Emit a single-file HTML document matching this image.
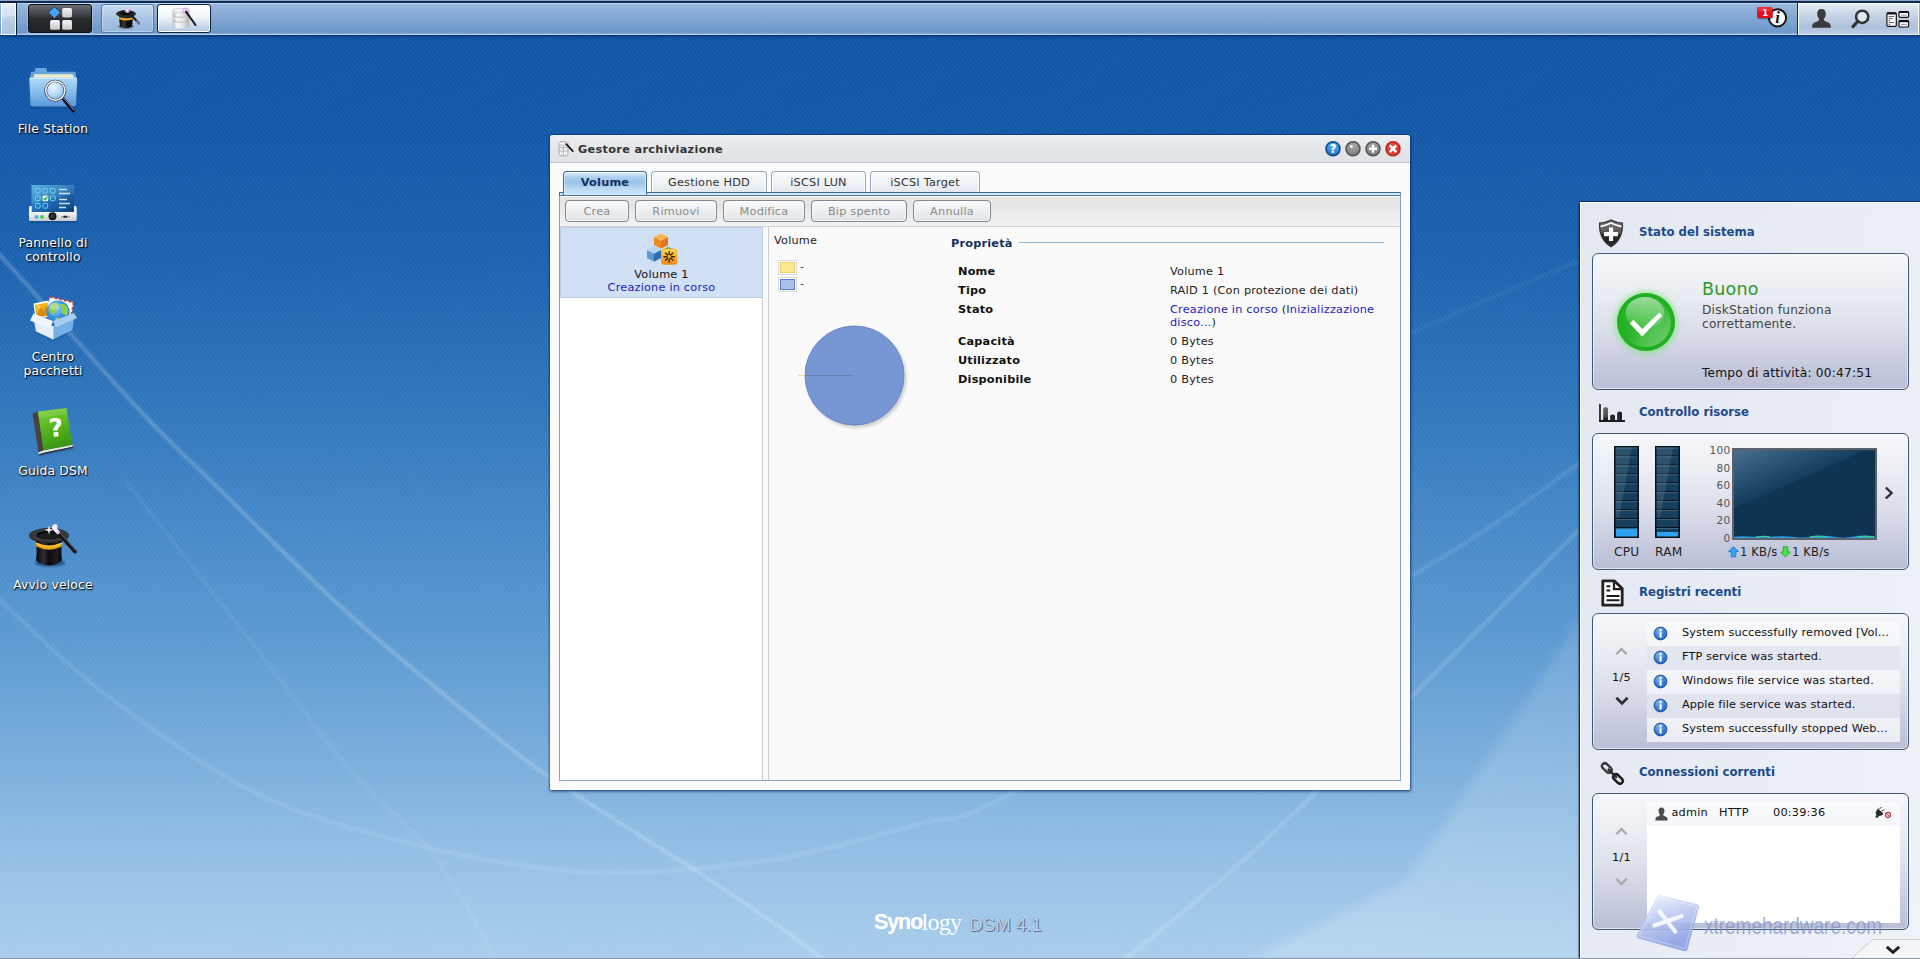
<!DOCTYPE html>
<html lang="it">
<head>
<meta charset="utf-8">
<title>DiskStation - Synology DSM 4.1</title>
<style>
*{box-sizing:border-box;margin:0;padding:0}
html,body{width:1920px;height:959px;overflow:hidden}
body{position:relative;font-family:"DejaVu Sans","Liberation Sans",sans-serif;font-size:11.3px;letter-spacing:.2px;color:#111;background:#1257a6}
.abs{position:absolute}
#bg{position:absolute;left:0;top:0;width:1920px;height:959px;
 background:linear-gradient(180deg,#1055a6 0px,#1157a8 120px,#1b62b0 260px,#2e75bc 400px,#4488c8 520px,#5c9ad2 640px,#7aaedd 760px,#98c2e7 870px,#a9ceed 959px)}
#stripes{position:absolute;left:0;top:0;width:1920px;height:959px;
 background:repeating-linear-gradient(53deg,rgba(255,255,255,.04) 0px,rgba(255,255,255,.04) 1.300px,rgba(255,255,255,0) 2.200px,rgba(0,0,0,.018) 2.600px,rgba(0,0,0,.018) 3px,rgba(255,255,255,0) 3.400px)}
#streaks{position:absolute;left:0;top:0}
#botline{position:absolute;left:0;top:958px;width:1920px;height:1px;background:#8d96a0;z-index:60}

/* taskbar */
#taskbar{position:absolute;left:0;top:0;width:1920px;height:36px;background:linear-gradient(180deg,#8fa5c3 0,#8fa5c3 .8px,#0e2b57 1.200px,#0e2b57 2.700px,#bfd7f1 3.100px,#bfd7f1 3.900px,#97b7dc 4.300px,#86a9d4 16px,#6a97ca 33.300px,#b3cfee 33.800px,#b3cfee 34.900px,#0c3672 35.200px,#0d3f82 36px);box-shadow:0 1px 2px rgba(8,40,100,.6)}
#showdesk{position:absolute;left:1px;top:3px;width:15px;height:32px;border:1px solid #fff;background:linear-gradient(170deg,#e4ecf6 0,#d6e2f0 40%,#bdd0e7 46%,#a9c3e0 100%);box-shadow:1px 0 0 #0a1a30,0 -1px 0 #0a1a30,1px -1px 0 #0a1a30}
.tbtn{position:absolute;top:4px;height:29px;border-radius:3px}
#mainmenu{left:28px;width:64px;border:1px solid #0c1118;background:linear-gradient(180deg,#5b6066 0,#2e3236 35%,#15181b 52%,#0a0c0e 100%);box-shadow:0 0 0 1px rgba(255,255,255,.25)}
#tb1{left:101px;width:53px;border:1px solid #4d78aa;background:linear-gradient(180deg,#c9dcf0 0,#a9c5e5 50%,#94b6dc 100%);box-shadow:inset 0 0 0 1px rgba(255,255,255,.35)}
#tb2{left:157px;width:54px;border:1px solid #10233d;background:linear-gradient(180deg,#ffffff 0,#f2f6fb 45%,#c5d6eb 80%,#b5cbe5 100%);box-shadow:inset 0 0 0 1px #fff}
#tray{position:absolute;left:1798px;top:3px;width:121px;height:32px;border:1px solid #fff;border-bottom-color:#e3ebf4;background:linear-gradient(180deg,#e6ecf4 0,#d3dcea 22%,#bfcde2 50%,#adc1dc 78%,#bccee4 100%);box-shadow:-1px 0 0 #1a2c47}

/* desktop icons */
.dicon{position:absolute;left:0;width:106px;text-align:center;color:#fff;font-size:12.300px;letter-spacing:.2px;line-height:14px;text-shadow:1px 1px 1px rgba(0,0,0,.9),0 1px 2px rgba(0,0,0,.55)}
.dsvg{position:absolute;left:27px;width:52px;height:52px}

/* window */
#win{position:absolute;left:550px;top:135px;width:860px;height:655px;background:#fbfbfb;border-radius:3px 3px 1px 1px;box-shadow:0 0 2px 1px rgba(10,40,90,.55),1px 2px 3px rgba(10,40,90,.35)}
#wtitle{position:absolute;left:0;top:0;width:860px;height:28px;border-radius:3px 3px 0 0;background:linear-gradient(180deg,#eceff2 0,#e4e7ea 50%,#dfe3e7 100%);border-bottom:1px solid #c3c7cc}
#wtitle b{position:absolute;left:28px;top:8px;letter-spacing:.31px;line-height:13px;color:#333;white-space:nowrap}
.wb{position:absolute;top:6px;width:16px;height:16px}
.tab{position:absolute;top:36px;height:22px;border:1px solid #98a7b6;border-bottom:none;border-radius:4px 4px 0 0;background:linear-gradient(180deg,#fbfcfd 0,#eef2f6 55%,#e2e8ee 100%);text-align:center;line-height:21px;color:#333;box-shadow:inset 0 1px 0 #fff,inset 1px 0 0 #fff,inset -1px 0 0 #fff}
.tab.act{height:24px;border-color:#41698b;background:linear-gradient(180deg,#eaf3fb 0,#b4d3f0 18%,#98c2ea 45%,#bad9f3 72%,#d0e8fa 100%);color:#15315e;font-weight:bold;z-index:2;box-shadow:inset 0 1px 0 rgba(255,255,255,.8),inset 1px 0 0 rgba(255,255,255,.5),inset -1px 0 0 rgba(255,255,255,.5)}
#tstrip{position:absolute;left:9px;top:57px;width:842px;height:4px;border:1px solid #41698b;border-bottom-color:#4b7596;background:linear-gradient(180deg,#c6e2f8,#d6edfc);border-right-color:#7ba0c0}
#panel{position:absolute;left:9px;top:61px;width:842px;height:585px;border:1px solid #89a4bd;border-top:none;background:#fff}
#tbar{position:absolute;left:0;top:0;width:840px;height:31px;border-top:1px solid #fff;border-bottom:1px solid #cfd1d3;background:linear-gradient(180deg,#e4e4e4 0,#e9e9e9 45%,#f3f3f3 100%)}
.btn{position:absolute;top:3px;height:22px;border:1px solid #7c8894;border-radius:4px;background:linear-gradient(180deg,#fafafa 0,#eef0f2 45%,#dfe3e8 100%);color:#8c8c8c;text-align:center;line-height:21.500px;box-shadow:inset 0 0 0 1px rgba(255,255,255,.7)}
#vlist{position:absolute;left:0;top:31px;width:203px;height:553px;background:#fff;border-right:1px solid #c9cdd1}
#vitem{position:absolute;left:0;top:0;width:203px;height:71px;background:#d0e1f5;border:1px dotted #a9b8cc;text-align:center}
#split{position:absolute;left:203px;top:31px;width:6px;height:553px;background:#fafafa;border-right:1px solid #c9cdd1}
#vright{position:absolute;left:209px;top:31px;width:631px;height:553px;background:#fafafa}
.lbl{position:absolute;left:189px;font-weight:bold;color:#111;white-space:nowrap;line-height:13px}
.val{position:absolute;left:401px;color:#222;white-space:nowrap;line-height:13px}
.blue{color:#1d1db6}

/* widgets */
#widgets{position:absolute;left:1579px;top:202px;width:341px;height:757px;border-left:1px solid #0f2f60;border-top:1px solid #fff;background:linear-gradient(100deg,#e3e8f1 0,#e9edf4 55%,#eff2f7 100%);box-shadow:inset 1px 0 0 #fff,0 -1px 0 #0d2d5e,-1px 0 1px rgba(10,40,90,.35)}
.wt{position:absolute;left:59px;font-family:'DejaVu Sans Condensed','DejaVu Sans',sans-serif;font-size:13px;font-weight:bold;color:#1b4a8c;line-height:16px;letter-spacing:0;white-space:nowrap}
.wp{position:absolute;left:12px;width:317px;height:137px;border:1px solid #3f5979;border-radius:6px;background:linear-gradient(180deg,#f5f7fa 0,#eceef4 25%,#dcdfea 55%,#c4c8dc 85%,#bbbfd6 100%);box-shadow:inset 0 0 0 1px rgba(255,255,255,.55)}
.t12{font-size:12.2px;letter-spacing:.2px}
.t13{font-size:12.2px;letter-spacing:.2px}
.row{position:absolute;left:54px;width:253px;height:24px}
.row span{position:absolute;left:35px;top:4px;line-height:14px;white-space:nowrap;color:#111;letter-spacing:.1px}
.nav{position:absolute;left:19px;width:18px;text-align:center;line-height:13px;color:#111}
</style>
</head>
<body>
<div id="bg"></div>
<div id="stripes"></div>
<svg id="streaks" width="1920" height="959" viewBox="0 0 1920 959">
 <defs><filter id="bl" x="-5%" y="-5%" width="110%" height="110%"><feGaussianBlur stdDeviation="1.400"/></filter><filter id="bl2" x="-5%" y="-5%" width="110%" height="110%"><feGaussianBlur stdDeviation="5"/></filter>
 <linearGradient id="beam" x1="0" y1="1" x2="1" y2="0"><stop offset="0" stop-color="#fff" stop-opacity=".20"/><stop offset="1" stop-color="#fff" stop-opacity=".04"/></linearGradient></defs>
 <path d="M1250,959L1408,880L1579,620L1920,300V959z" fill="url(#beam)" filter="url(#bl2)"/>
 <g fill="none" stroke="#fff" filter="url(#bl)">
  <path d="M-20,235C-17,238 -25,228 0,255C25,282 95,362 130,400C165,438 173,444 210,480C247,516 302,572 350,615C398,658 463,710 500,740C537,770 538,769 572,792C606,815 666,851 707,878C748,905 798,940 818,955C838,970 828,963 830,965" stroke-opacity=".3" stroke-width="2.600"/>
  <path d="M-20,580C-17,583 -20,582 0,600C20,618 58,658 100,690C142,722 200,765 250,790C300,815 344,827 400,841C456,855 522,869 584,872C646,875 713,868 769,860C825,852 881,834 922,823C963,812 934,833 1015,792C1096,751 1314,633 1408,578C1502,523 1530,497 1579,464C1628,431 1680,394 1700,380" stroke-opacity=".15" stroke-width="3"/>
  <path d="M125,480C146,507 212,592 250,640C288,688 320,735 350,770C380,805 405,818 430,850C455,882 488,946 500,965" stroke-opacity=".08" stroke-width="3"/>
  <path d="M1118,965C1119,964 1106,974 1125,959C1144,944 1199,899 1230,872C1261,845 1280,827 1310,798C1340,769 1363,745 1408,700C1453,655 1530,578 1579,530C1628,482 1680,430 1700,410" stroke-opacity=".2" stroke-width="3"/>
  <path d="M1300,380C1318,372 1362,354 1408,334C1454,314 1530,281 1579,261C1628,241 1680,223 1700,215" stroke-opacity=".07" stroke-width="3"/>
 </g>
</svg>
<div id="botline"></div>

<!-- TASKBAR -->
<div id="taskbar">
 <div id="showdesk"></div>
 <div id="mainmenu" class="tbtn"><svg width="62" height="27" viewBox="0 0 62 27" style="position:absolute;left:0;top:0">
   <defs><pattern id="ck" width="2.400" height="2.400" patternUnits="userSpaceOnUse"><rect width="1.200" height="1.200" fill="#fff" fill-opacity=".17"/><rect x="1.200" y="1.200" width="1.200" height="1.200" fill="#fff" fill-opacity=".17"/></pattern>
   <linearGradient id="sq" x1="0" y1="0" x2="0" y2="1"><stop offset="0" stop-color="#f4f4f4"/><stop offset="1" stop-color="#c9c9c9"/></linearGradient></defs>
   <rect width="62" height="27" rx="2" fill="url(#ck)"/>
   <path d="M25.400,1.500L31.400,7.500L25.400,13.500L19.400,7.500z" fill="#4a9ff6" stroke="#2a2f36" stroke-width=".8"/>
   <rect x="33.200" y="3" width="9.800" height="9.400" rx="1.600" fill="url(#sq)"/><rect x="21.100" y="15" width="9.800" height="9.800" rx="1.600" fill="url(#sq)"/><rect x="33.200" y="15" width="9.800" height="9.800" rx="1.600" fill="url(#sq)"/>
  </svg></div>
 <div id="tb1" class="tbtn"><svg width="30" height="24" viewBox="0 0 30 24" style="position:absolute;left:13px;top:2px">
   <defs><linearGradient id="hat" x1="0" y1="0" x2="1" y2="0"><stop offset="0" stop-color="#000"/><stop offset=".35" stop-color="#3a3a3a"/><stop offset=".6" stop-color="#0a0a0a"/><stop offset="1" stop-color="#000"/></linearGradient></defs>
   <ellipse cx="11" cy="19.500" rx="8" ry="2.600" fill="#000" opacity=".35"/>
   <path d="M3.800,7.500L5,19.500Q11,22.500 17,19.500L18.200,7.500z" fill="url(#hat)"/>
   <ellipse cx="11" cy="6.700" rx="10" ry="3.600" fill="#2c2c2c"/><ellipse cx="11" cy="6.300" rx="6.200" ry="1.900" fill="#0c0c0c"/>
   <path d="M4.050,10L4.300,12.300Q11,14.800 17.700,12.300L17.950,10Q11,12.500 4.050,10z" fill="#e8a818"/>
   <path d="M12.500,4L24,16.500" stroke="#1c1c22" stroke-width="2.100" stroke-linecap="round"/><path d="M21.500,14L24,16.600" stroke="#8a8a92" stroke-width="1.500" stroke-linecap="round"/>
   <circle cx="12.300" cy="3.600" r="2.400" fill="#e9b8f4" opacity=".9"/><circle cx="12.300" cy="3.600" r="1" fill="#fff"/>
  </svg></div>
 <div id="tb2" class="tbtn"><svg width="30" height="24" viewBox="0 0 30 24" style="position:absolute;left:13px;top:2px">
   <defs><linearGradient id="cyl" x1="0" y1="0" x2="1" y2="0"><stop offset="0" stop-color="#c2c2c2"/><stop offset=".3" stop-color="#f8f8f8"/><stop offset=".65" stop-color="#e2e2e2"/><stop offset="1" stop-color="#b0b0b0"/></linearGradient></defs>
   <path d="M1.500,3.500V19.500Q10,23.500 18.500,19.500V3.500z" fill="url(#cyl)"/>
   <ellipse cx="10" cy="3.500" rx="8.500" ry="2.300" fill="#f2f2f2" stroke="#c4c4c4" stroke-width=".6"/>
   <path d="M1.500,8.500Q10,12.200 18.500,8.500M1.500,13.500Q10,17.200 18.500,13.500" fill="none" stroke="#b9b9b9" stroke-width=".9"/>
   <circle cx="14.500" cy="3.800" r="3.400" fill="#d8a8f0" opacity=".75"/><circle cx="14.500" cy="3.800" r="1.200" fill="#fff"/>
   <path d="M15,4.600L24.500,18" stroke="#1c1c22" stroke-width="2.100" stroke-linecap="round"/>
  </svg></div>
 <div id="tray"><svg width="120" height="32" viewBox="1798 3 120 32" style="position:absolute;left:-1px;top:-1px">
   <path d="M1821.500,9C1824.200,9 1825.800,11 1825.800,13.800C1825.800,16 1824.900,17.800 1823.800,18.900C1823.900,20.600 1825,21.200 1827.200,22C1830.300,23.100 1830.900,24.800 1830.900,27.800H1812.100C1812.100,24.800 1812.700,23.100 1815.800,22C1818,21.200 1819.100,20.600 1819.200,18.900C1818.100,17.800 1817.200,16 1817.200,13.800C1817.200,11 1818.800,9 1821.500,9Z" fill="#3b3b3b"/>
   <circle cx="1862.200" cy="16.800" r="6.100" fill="#fff" fill-opacity=".45" stroke="#333" stroke-width="2.500"/><path d="M1857.600,21.700L1853,26.600" stroke="#333" stroke-width="3.200" stroke-linecap="round"/>
   <rect x="1886.900" y="12.900" width="9.400" height="13.400" rx="1.300" fill="#fff" stroke="#111" stroke-width="1.200"/><rect x="1886.900" y="12.400" width="9.400" height="2" rx=".8" fill="#111"/>
   <path d="M1888.600,16.600h5.600M1888.600,18.600h4M1888.600,20.600h1.500M1888.600,22.600h5.600M1888.600,24.400h1.500" stroke="#333" stroke-width=".8"/>
   <rect x="1899" y="11.500" width="9.600" height="5.900" rx="1.300" fill="#fff" stroke="#111" stroke-width="1.200"/><rect x="1899" y="11" width="9.600" height="2" rx=".8" fill="#111"/>
   <rect x="1899" y="20.700" width="9.600" height="6.300" rx="1.300" fill="#fff" stroke="#111" stroke-width="1.200"/><rect x="1899" y="20.200" width="9.600" height="2" rx=".8" fill="#111"/>
   <path d="M1901.200,15.200h1.200M1903.300,15.200h1.200M1905.400,15.200h1.200M1901.200,24.600h1.200M1903.300,24.600h1.200M1905.400,24.600h1.200" stroke="#333" stroke-width=".9"/>
  </svg></div>
 <svg class="abs" style="left:1752px;top:3px" width="40" height="30" viewBox="1752 3 40 30">
  <circle cx="1777.500" cy="17.800" r="8.600" fill="#fff" stroke="#141414" stroke-width="2"/>
  <text x="1777.600" y="23.400" font-family="'Liberation Serif',serif" font-style="italic" font-weight="bold" font-size="16.500" fill="#111" text-anchor="middle" letter-spacing="0">i</text>
  <rect x="1757.500" y="8.200" width="15.600" height="11" rx="1.800" fill="#000" opacity=".35"/>
  <rect x="1757" y="7" width="15.600" height="11" rx="1.800" fill="#e20e1a"/><rect x="1757" y="7" width="15.600" height="4.500" rx="1.800" fill="#f0505a" opacity=".5"/>
  <text x="1765.300" y="15.600" font-family="'DejaVu Sans',sans-serif" font-weight="bold" font-size="8.500" fill="#fff" text-anchor="middle" letter-spacing="0">1</text>
 </svg>
</div>


<!-- DESKTOP ICONS -->
<svg width="0" height="0" style="position:absolute"><defs>
 <linearGradient id="fF" x1="0" y1="0" x2="0" y2="1"><stop offset="0" stop-color="#b4d9f8"/><stop offset=".5" stop-color="#86bdec"/><stop offset="1" stop-color="#5a98d6"/></linearGradient>
 <linearGradient id="fB" x1="0" y1="0" x2="0" y2="1"><stop offset="0" stop-color="#6aa8e0"/><stop offset="1" stop-color="#3f7fc4"/></linearGradient>
 <radialGradient id="lens" cx=".4" cy=".35" r=".7"><stop offset="0" stop-color="#f4fbff" stop-opacity=".95"/><stop offset=".6" stop-color="#b8dcf6" stop-opacity=".8"/><stop offset="1" stop-color="#7fb4e4" stop-opacity=".8"/></radialGradient>
 <linearGradient id="scr" x1="0" y1="0" x2="1" y2="1"><stop offset="0" stop-color="#4aa8e2"/><stop offset=".5" stop-color="#1f6fb4"/><stop offset="1" stop-color="#0e3f7a"/></linearGradient>
 <linearGradient id="bse" x1="0" y1="0" x2="0" y2="1"><stop offset="0" stop-color="#f6f7f9"/><stop offset="1" stop-color="#c9ccd2"/></linearGradient>
 <radialGradient id="glb" cx=".4" cy=".35" r=".75"><stop offset="0" stop-color="#8fd0ff"/><stop offset=".55" stop-color="#3a8ee0"/><stop offset="1" stop-color="#1b5cb0"/></radialGradient>
 <linearGradient id="bkc" x1="0" y1="0" x2=".3" y2="1"><stop offset="0" stop-color="#7bd238"/><stop offset=".5" stop-color="#58b81e"/><stop offset="1" stop-color="#3c9612"/></linearGradient>
 <linearGradient id="hat2" x1="0" y1="0" x2="1" y2="0"><stop offset="0" stop-color="#000"/><stop offset=".3" stop-color="#2f2f33"/><stop offset=".5" stop-color="#0c0c0e"/><stop offset=".8" stop-color="#1d1d20"/><stop offset="1" stop-color="#000"/></linearGradient>
 <filter id="ds" x="-20%" y="-20%" width="140%" height="150%"><feGaussianBlur stdDeviation="1.2"/></filter>
</defs></svg>

<svg class="dsvg" style="top:64px" viewBox="-2 -2 52 52">
 <path d="M1,40.500H48V42H1z" fill="#04204a" opacity=".35" filter="url(#ds)"/>
 <path d="M6,5.800V3.500Q6,2 7.500,2H16.500Q18,2 18,3.500V5.800H45Q47,5.800 47,7.800V38H1.500V7.800Q1.500,5.800 3.500,5.800z" fill="url(#fB)"/>
 <path d="M5,8.200H43.500L44.500,9.400V14H5z" fill="#f6f2d6"/><path d="M5,9.600H44.300" stroke="#ddd8b4" stroke-width=".6"/>
 <path d="M0.300,13Q0.200,11.300 2,11.300H46.500Q48.300,11.300 48.200,13L47,38.600Q46.900,40.400 45,40.400H3.500Q1.600,40.400 1.500,38.600z" fill="url(#fF)"/>
 <path d="M0.800,12.300H47.700" stroke="#d8ecfc" stroke-width=".9"/>
 <path d="M33.500,32.200L44.300,44.700" stroke="#0a0d18" stroke-width="3.300" stroke-linecap="round"/><path d="M34.200,31.600L44.900,44" stroke="#9aa4b6" stroke-width="1" stroke-linecap="round"/>
 <circle cx="26.300" cy="24.600" r="9.600" fill="url(#lens)" stroke="#2b3650" stroke-width="2.600"/><circle cx="26.300" cy="24.600" r="9.600" fill="none" stroke="#eef3f9" stroke-width="1.500"/>
 <path d="M19.500,22Q21.500,17.500 26.500,17" fill="none" stroke="#fff" stroke-width="1.200" opacity=".8"/>
</svg>
<div class="dicon" style="top:122px">File Station</div>

<svg class="dsvg" style="top:178px" viewBox="-2 -2 52 52">
 <rect x="1" y="39" width="46" height="3.500" fill="#04204a" opacity=".4" filter="url(#ds)"/>
 <path d="M0,28Q0,26 1.500,26H46Q47.500,26 47.500,28V39Q47.500,41 45.500,41H2Q0,41 0,39z" fill="url(#bse)"/>
 <rect x="2.500" y="5" width="42.500" height="27" fill="url(#scr)"/>
 <path d="M2.500,5H45V14L2.500,24z" fill="#fff" opacity=".1"/>
 <g fill="none" stroke="#6fd3f4" stroke-width="1"><rect x="6.500" y="8.500" width="4.600" height="4.600" rx=".8"/><rect x="14" y="8.500" width="4.600" height="4.600" rx=".8"/><rect x="21.500" y="8.500" width="4.600" height="4.600" rx=".8"/><rect x="6.500" y="16" width="4.600" height="4.600" rx=".8"/><rect x="21.500" y="16" width="4.600" height="4.600" rx=".8"/><rect x="6.500" y="23.500" width="4.600" height="4.600" rx=".8"/><rect x="14" y="23.500" width="4.600" height="4.600" rx=".8"/></g>
 <rect x="13.600" y="15.600" width="5.600" height="5.600" rx="1" fill="#e9f6ea"/><path d="M14.600,18.400L16,19.900L18.400,16.600" fill="none" stroke="#2a9a3a" stroke-width="1.200"/>
 <path d="M30,9.500h8M30,13.500h11M30,19.500h8M30,23.500h11M30,27.500h7" stroke="#d9effc" stroke-width="1.300" opacity=".9"/>
 <path d="M0,32V28Q0,26 1.500,26H2.500V32zM47.500,32V28Q47.500,26 46,26H45V32z" fill="#eceef2"/>
 <rect x="0" y="32" width="47.500" height="9" rx="1.500" fill="url(#bse)"/>
 <circle cx="7.500" cy="36.800" r="1.900" fill="#3db4ee"/><circle cx="13" cy="36.800" r="1.900" fill="#46c83c"/>
 <circle cx="23.500" cy="36.300" r="4" fill="#15171a"/><circle cx="23.500" cy="36.300" r="2.300" fill="#33373d"/>
 <rect x="32" y="36" width="9" height="1.500" fill="#9a9da3"/><rect x="34.500" y="35.800" width="3.500" height="1.900" fill="#222"/>
</svg>
<div class="dicon" style="top:236px">Pannello di<br>controllo</div>

<svg class="dsvg" style="top:292px" viewBox="-2 -2 52 52">
 <path d="M6,38L24,46L44,36L24,42z" fill="#04204a" opacity=".45" filter="url(#ds)"/>
 <path d="M21,3L44.500,8.500L42,23L18.500,17.500z" fill="#fbfbfb" stroke="#d7d7d7" stroke-width=".5"/>
 <path d="M21,3L44.500,8.500" stroke="#d8303a" stroke-width="1.800" stroke-dasharray="2.400 2.400"/><path d="M44.500,8.500L42,23" stroke="#d8303a" stroke-width="1.600" stroke-dasharray="2.400 2.400"/>
 <path d="M4.500,9.500L19.500,6.500L21.500,22.500L6.500,25z" fill="#fff"/><path d="M6,11L18.600,8.400L20.200,21.400L7.600,23.500z" fill="#f2b21c"/><path d="M8,20L12,13L15,17L17.500,11.500L19.800,21.400L7.600,23.500z" fill="#d88a12"/><circle cx="10" cy="13" r="1.600" fill="#ffe15a"/>
 <circle cx="29" cy="18" r="11.500" fill="url(#glb)"/>
 <path d="M21,12Q24,8 29,8.500Q27,12 29,14Q26,17 24.500,21Q21,19 19.500,16Q20,13.500 21,12zM31,10Q35,9 38.500,13Q40,17 38.500,21Q35,22 33,19Q31,16 32.500,14Q30.500,12.500 31,10zM26,24Q29,23 31,25.500Q30,28.500 28.500,29Q26.500,27.500 26,24z" fill="#8fd04a"/>
 <ellipse cx="25.500" cy="12.500" rx="5.500" ry="3.500" fill="#fff" opacity=".3"/>
 <path d="M4.500,24L24,32V45.500L7,37.500z" fill="#e2eefb"/><path d="M24,32L45,22.500L43.500,36L24,45.500z" fill="#78aee6"/>
 <path d="M1,26.500L4.500,19.500L24,27L21,34.500z" fill="#eef5fd"/><path d="M24,27L45,19L48,24L27,33.500z" fill="#a9cdf2"/>
 <path d="M24,32V45.500" stroke="#fff" stroke-width=".8" opacity=".7"/>
</svg>
<div class="dicon" style="top:350px">Centro<br>pacchetti</div>

<svg class="dsvg" style="top:406px" viewBox="-2 -2 52 52">
 <path d="M10,45.500L44,39L45,40.500L11,47.500z" fill="#04204a" opacity=".5" filter="url(#ds)"/>
 <path d="M3.500,5.500L9,3.500L14.500,42.500L9.500,44.300z" fill="#4b423b"/>
 <path d="M9,3.500L37.500,0L43.500,37L14.500,42.500z" fill="url(#bkc)"/>
 <path d="M9,3.500L37.500,0L38.500,6L10,10z" fill="#fff" opacity=".12"/>
 <path d="M9.500,44.300L14.500,42.500L43.500,37L43.800,38.800L15,44.700L10,46.300z" fill="#e9e9e4"/><path d="M10,46.300L15,44.700L43.800,38.800L44,39.800L15.200,45.900L10.300,47.400z" fill="#2c2a28"/>
 <text x="27" y="28.500" font-family="'DejaVu Sans',sans-serif" font-weight="bold" font-size="25" fill="#fff" text-anchor="middle" letter-spacing="0" transform="rotate(-6 27 20)">?</text>
</svg>
<div class="dicon" style="top:464px">Guida DSM</div>

<svg class="dsvg" style="top:520px" viewBox="-2 -2 52 52">
 <ellipse cx="21" cy="41" rx="15" ry="3.500" fill="#04204a" opacity=".55" filter="url(#ds)"/>
 <path d="M6.500,17Q8.500,28 7,38.500Q13,43.500 20,43.500Q27,43.500 33,38.500Q31.500,28 33.500,17z" fill="url(#hat2)"/>
 <ellipse cx="20" cy="13.500" rx="20" ry="7.500" fill="#2b2b2e"/><ellipse cx="20" cy="13.200" rx="19" ry="6.600" fill="#3a3a3e"/>
 <ellipse cx="20" cy="13" rx="12.500" ry="4.300" fill="#0b0b0d"/><ellipse cx="20" cy="14" rx="10" ry="2.800" fill="#1d1d20"/>
 <path d="M6.900,20.300Q20,26.500 33.100,20.300L32.700,24.600Q20,30.800 7.300,24.600z" fill="#eaa714"/><path d="M7,21.300Q20,27.500 33,21.300" fill="none" stroke="#ffd34d" stroke-width=".9"/>
 <path d="M26.500,7.500L46,29.500" stroke="#16161a" stroke-width="3.800" stroke-linecap="round"/><path d="M27.600,6.800L46.800,28.500" stroke="#6d6d75" stroke-width="1" stroke-linecap="round"/>
 <path d="M24.800,5.600L28.800,10.200" stroke="#e9c8ff" stroke-width="4" stroke-linecap="round"/><path d="M24.800,5.600L27.400,8.600" stroke="#fff" stroke-width="2.600" stroke-linecap="round"/>
 <path d="M19,7L20,3.500L21,7L24.500,8L21,9L20,12.500L19,9L15.500,8z" fill="#fff" opacity=".95"/><circle cx="26" cy="4.500" r="2.600" fill="#fff" opacity=".8"/>
</svg>
<div class="dicon" style="top:578px">Avvio veloce</div>


<div id="win">
 <div id="wtitle">
  <svg class="abs" style="left:8px;top:5px" width="16" height="17" viewBox="0 0 16 17">
   <path d="M1,3.5Q1,1.5 5.5,1.5T10,3.5V14Q10,16 5.5,16T1,14Z" fill="#f1f1f1" stroke="#a9a9a9" stroke-width="1"/>
   <path d="M1,7Q5.5,9 10,7M1,10.5Q5.5,12.5 10,10.5M5.5,5.5V16" fill="none" stroke="#b5b5b5" stroke-width=".9"/>
   <ellipse cx="5.5" cy="3.5" rx="4.5" ry="1.8" fill="#fff" stroke="#a9a9a9" stroke-width=".8"/>
   <circle cx="8" cy="3.6" r="2.4" fill="#e6c8f4" opacity=".8"/>
   <path d="M8.3,4.2L14.8,11.2" stroke="#16101c" stroke-width="1.7" stroke-linecap="round"/>
  </svg>
  <b>Gestore archiviazione</b>
  <svg class="abs" style="left:772px;top:4px" width="82" height="20" viewBox="0 0 82 20">
   <defs>
    <radialGradient id="gh" cx=".5" cy=".3" r=".8"><stop offset="0" stop-color="#6db4f2"/><stop offset=".6" stop-color="#2f86dc"/><stop offset="1" stop-color="#1c64b8"/></radialGradient>
    <radialGradient id="gg" cx=".5" cy=".3" r=".8"><stop offset="0" stop-color="#a9a9a9"/><stop offset=".6" stop-color="#8a8a8a"/><stop offset="1" stop-color="#707070"/></radialGradient>
    <radialGradient id="gr" cx=".5" cy=".35" r=".8"><stop offset="0" stop-color="#e8564a"/><stop offset=".6" stop-color="#d63a2e"/><stop offset="1" stop-color="#e8776a"/></radialGradient>
   </defs>
   <circle cx="11" cy="9.75" r="7" fill="url(#gh)" stroke="#124a88" stroke-width="1.5"/>
   <text x="11.2" y="14" font-family="DejaVu Sans,sans-serif" font-weight="bold" font-size="11.5" fill="#fff" text-anchor="middle" letter-spacing="0">?</text>
   <circle cx="31" cy="9.75" r="7" fill="url(#gg)" stroke="#535353" stroke-width="1.5"/>
   <rect x="28" y="6.2" width="2.6" height="2.6" rx=".8" fill="#fff"/>
   <circle cx="51" cy="9.75" r="7" fill="url(#gg)" stroke="#535353" stroke-width="1.5"/>
   <path d="M51,5.8V13.7M47,9.75H55" stroke="#fff" stroke-width="2.3"/>
   <circle cx="71" cy="9.75" r="7" fill="url(#gr)" stroke="#b5281f" stroke-width="1.5"/>
   <path d="M67.7,6.4L74.3,13.1M74.3,6.4L67.7,13.1" stroke="#fff" stroke-width="2.5"/>
  </svg>
 </div>
 <div class="tab act" style="left:13px;width:84px">Volume</div>
 <div class="tab" style="left:101px;width:116px">Gestione HDD</div>
 <div class="tab" style="left:221px;width:95px">iSCSI LUN</div>
 <div class="tab" style="left:320px;width:110px">iSCSI Target</div>
 <div id="tstrip"></div>
 <div id="panel">
  <div id="tbar">
   <div class="btn" style="left:5px;width:64px">Crea</div>
   <div class="btn" style="left:75px;width:82px">Rimuovi</div>
   <div class="btn" style="left:163px;width:82px">Modifica</div>
   <div class="btn" style="left:251px;width:96px">Bip spento</div>
   <div class="btn" style="left:353px;width:78px">Annulla</div>
  </div>
  <div id="vlist">
   <div id="vitem">
    <svg class="abs" style="left:84px;top:4px" width="33" height="33" viewBox="0 0 33 33">
     <defs><linearGradient id="bd" x1="0" y1="0" x2="0" y2="1"><stop offset="0" stop-color="#ffd75a"/><stop offset=".55" stop-color="#f9ac2c"/><stop offset="1" stop-color="#f08a1a"/></linearGradient></defs>
     <path d="M18,17.5l5,-3l5,3v6l-5,3l-5,-3z" fill="#7db83a"/>
     <path d="M9,5l7,-3.6l7,3.6l-7,3.8z" fill="#f8b84e"/><path d="M9,5l7,3.8v8l-7,-3.8z" fill="#ee8a24"/><path d="M23,5l-7,3.8v8l7,-3.8z" fill="#e2761c"/>
     <path d="M2,18l7,-3.6l7,3.6l-7,3.8z" fill="#b6d5f0"/><path d="M2,18l7,3.8v8l-7,-3.8z" fill="#5d9ad2"/><path d="M16,18l-7,3.8v8l7,-3.8z" fill="#2f6fae"/>
     <rect x="16.5" y="17" width="15.5" height="15.5" rx="2.6" fill="url(#bd)" stroke="#e79a2a" stroke-width=".6"/>
     <g stroke="#3a1d05" stroke-width="1.4" stroke-linecap="round"><path d="M24.2,19.6v3M24.2,26.9v3M19,24.7h3M26.4,24.7h3M20.6,21.1l2,2M25.8,26.3l2,2M27.8,21.1l-2,2M22.6,26.3l-2,2"/></g>
    </svg>
    <div class="abs" style="left:0;top:40px;width:201px;line-height:13px;color:#111">Volume 1</div>
    <div class="abs blue" style="left:0;top:53px;width:201px;line-height:13px">Creazione in corso</div>
   </div>
  </div>
  <div id="split"></div>
  <div id="vright">
   <div class="abs" style="left:5px;top:7px;line-height:13px;color:#222">Volume</div>
   <div class="abs" style="left:9px;top:33px;width:19px;height:15px;border:1px solid #dcdcdc;background:#fff"><div style="margin:1px;width:15px;height:11px;border:1px solid #ecd06a;background:#fee791"></div></div>
   <div class="abs" style="left:31px;top:33px;line-height:13px;color:#444">-</div>
   <div class="abs" style="left:9px;top:50px;width:19px;height:15px;border:1px solid #dcdcdc;background:#fff"><div style="margin:1px;width:15px;height:11px;border:1px solid #5d7fc8;background:#a9c0ea"></div></div>
   <div class="abs" style="left:31px;top:50px;line-height:13px;color:#444">-</div>
   <svg class="abs" style="left:20px;top:86px" width="140" height="130" viewBox="0 0 140 130">
    <defs><filter id="ps" x="-20%" y="-20%" width="140%" height="140%"><feGaussianBlur stdDeviation="1.5"/></filter></defs>
    <circle cx="67.5" cy="65" r="50" fill="#000" opacity=".16" filter="url(#ps)"/>
    <circle cx="65.5" cy="62.5" r="49.5" fill="#7797d4" stroke="#6886cc" stroke-width="1"/>
    <line x1="9" y1="62.5" x2="16" y2="62.5" stroke="#f0e090" stroke-width="1"/>
    <line x1="16" y1="62.5" x2="65" y2="62.5" stroke="#6a82b0" stroke-width="1"/>
   </svg>
   <div class="abs" style="left:182px;top:10px;font-weight:bold;color:#15315e;line-height:13px;background:#fafafa;padding-right:6px;z-index:1">Propriet&agrave;</div>
   <div class="abs" style="left:250px;top:15px;width:365px;height:1px;background:#8fb4d4"></div>
   <div class="lbl" style="top:38px">Nome</div><div class="val" style="top:38px">Volume 1</div>
   <div class="lbl" style="top:57px">Tipo</div><div class="val" style="top:57px">RAID 1 (Con protezione dei dati)</div>
   <div class="lbl" style="top:76px">Stato</div><div class="val blue" style="top:76px;white-space:normal;width:215px">Creazione in corso <span style="color:#222">(</span>Inizializzazione disco...<span style="color:#222">)</span></div>
   <div class="lbl" style="top:108px">Capacit&agrave;</div><div class="val" style="top:108px">0 Bytes</div>
   <div class="lbl" style="top:127px">Utilizzato</div><div class="val" style="top:127px">0 Bytes</div>
   <div class="lbl" style="top:146px">Disponibile</div><div class="val" style="top:146px">0 Bytes</div>
  </div>
 </div>
</div>


<div id="widgets">

 <svg width="0" height="0" style="position:absolute"><defs>
  <radialGradient id="gi" cx=".4" cy=".3" r=".8"><stop offset="0" stop-color="#7db4f0"/><stop offset=".55" stop-color="#3a80d8"/><stop offset="1" stop-color="#245fb4"/></radialGradient>
  <linearGradient id="gsh" x1="0" y1="0" x2="0" y2="1"><stop offset="0" stop-color="#7a7a7a"/><stop offset=".5" stop-color="#555"/><stop offset=".52" stop-color="#1e1e1e"/><stop offset="1" stop-color="#2e2e2e"/></linearGradient>
  <linearGradient id="gbar" x1="0" y1="0" x2="0" y2="1"><stop offset="0" stop-color="#6a6a6a"/><stop offset=".7" stop-color="#4a4a4a"/><stop offset="1" stop-color="#111"/></linearGradient>
  <radialGradient id="ggr" cx=".5" cy=".5" r=".5"><stop offset="0" stop-color="#3cbc3c"/><stop offset=".8" stop-color="#25b325"/><stop offset="1" stop-color="#1fae1f"/></radialGradient>
  <linearGradient id="ggl" x1="0" y1="0" x2="0" y2="1"><stop offset="0" stop-color="#fff" stop-opacity=".55"/><stop offset="1" stop-color="#fff" stop-opacity=".05"/></linearGradient>
  <linearGradient id="ggl2" x1="0" y1="0" x2="1" y2="1"><stop offset=".45" stop-color="#fff" stop-opacity="0"/><stop offset="1" stop-color="#fff" stop-opacity=".42"/></linearGradient>
  <filter id="glow" x="-30%" y="-30%" width="160%" height="160%"><feGaussianBlur stdDeviation="3"/></filter>
 </defs></svg>
 <!-- shield -->
 <svg class="abs" style="left:18px;top:16px" width="26" height="29" viewBox="0 0 26 29">
  <path d="M13,1.2C9.5,3 5,4 1.6,4.2C1.2,13 3,21.5 13,27.8C23,21.5 24.8,13 24.4,4.2C21,4 16.500,3 13,1.200Z" fill="url(#gsh)" stroke="#383838" stroke-width="1.3"/>
  <path d="M3.200,7.300C7,6.400 10,5.300 13,4C16,5.300 19,6.400 22.800,7.300" fill="none" stroke="#fff" stroke-width="1.700" stroke-linecap="round"/>
  <path d="M11,8.400h4.100v4.600h5v4.200h-5v4.800h-4.100v-4.800h-5v-4.200h5z" fill="#fff"/>
 </svg>
 <!-- bars icon -->
 <svg class="abs" style="left:19px;top:199px" width="28" height="22" viewBox="0 0 28 22">
  <path d="M0,1.500l2,1V18H0z" fill="#3a3a3a"/><rect x="0" y="18" width="26" height="2" fill="#1c1c1c"/>
  <path d="M4.200,18V6.500Q6.600,3.500 9,6.500V18z" fill="url(#gbar)"/>
  <path d="M11.200,18V13.800Q13.600,11.300 16,13.800V18z" fill="#242424"/>
  <path d="M18.200,18V10.800Q20.600,8.300 23,10.800V18z" fill="#242424"/>
 </svg>
 <!-- doc icon -->
 <svg class="abs" style="left:19px;top:375px" width="26" height="30" viewBox="0 0 26 30">
  <path d="M3.800,2.800H15.200L23.200,10.600V27.200H3.800z" fill="#fff" stroke="#222" stroke-width="2.800" stroke-linejoin="round"/>
  <path d="M15,3.500V11.200H22.800" fill="none" stroke="#222" stroke-width="2.300"/>
  <path d="M7.500,8.200h3.800M7.500,12.600h3.800M7.500,18h13M7.500,22.200h13" stroke="#1a1a1a" stroke-width="2"/>
 </svg>
 <!-- chain icon -->
 <svg class="abs" style="left:19px;top:556px" width="28" height="28" viewBox="0 0 28 28">
  <g fill="none" stroke-width="2.400">
   <rect x="-5.600" y="-2.900" width="11.200" height="5.800" rx="2.900" transform="translate(7.800,9) rotate(45)" stroke="#3c3c3c"/>
   <rect x="-5.600" y="-2.900" width="11.200" height="5.800" rx="2.900" transform="translate(19,20) rotate(45)" stroke="#181818"/>
   <path d="M9.600,10.600L17.200,18.200" stroke="#2a2a2a" stroke-width="2.500" stroke-linecap="round"/>
  </g>
 </svg>
 <div class="wt" style="top:21px">Stato del sistema</div>
 <div class="wp" style="top:50px">
  <svg class="abs" style="left:10.500px;top:25.500px" width="84" height="84" viewBox="-42 -42 84 84">
   <circle cx="0" cy="0.500" r="31" fill="#7de87d" opacity=".75" filter="url(#glow)"/>
   <circle cx="0" cy="0" r="29" fill="url(#ggr)"/>
   <ellipse cx="-1" cy="-9" rx="19.500" ry="16" fill="url(#ggl)"/>
   <circle cx="0" cy="0" r="25" fill="url(#ggl2)"/>
   <path d="M-16.300,1.600L-12.600,-2.200L-3.800,7L13.400,-9.600L16.200,-6.200L-3.800,14.500z" fill="#fff"/>
  </svg>
  <div class="abs" style="left:109px;top:24px;font-size:17.5px;line-height:22px;color:#2b9a2b;letter-spacing:.2px">Buono</div>
  <div class="abs t13" style="left:109px;top:49px;line-height:14px;color:#444;white-space:nowrap">DiskStation funziona<br>correttamente.</div>
  <div class="abs t13" style="left:109px;top:112px;line-height:15px;color:#111;white-space:nowrap">Tempo di attivit&agrave;: 00:47:51</div>
 </div>
 <div class="wt" style="top:201px">Controllo risorse</div>
 <div class="wp" style="top:230px">
  <svg class="abs" style="left:21px;top:12px" width="25" height="92" viewBox="0 0 25 92"><rect x="0" y="0" width="25" height="92" fill="#05121d"/><rect x="1.500" y="1.50" width="22" height="7.900" fill="#163f5e"/><rect x="1.500" y="1.50" width="22" height="1" fill="#3f6481"/><rect x="1.500" y="10.45" width="22" height="7.900" fill="#163f5e"/><rect x="1.500" y="10.45" width="22" height="1" fill="#3f6481"/><rect x="1.500" y="19.40" width="22" height="7.900" fill="#163f5e"/><rect x="1.500" y="19.40" width="22" height="1" fill="#3f6481"/><rect x="1.500" y="28.35" width="22" height="7.900" fill="#163f5e"/><rect x="1.500" y="28.35" width="22" height="1" fill="#3f6481"/><rect x="1.500" y="37.30" width="22" height="7.900" fill="#163f5e"/><rect x="1.500" y="37.30" width="22" height="1" fill="#3f6481"/><rect x="1.500" y="46.25" width="22" height="7.900" fill="#163f5e"/><rect x="1.500" y="46.25" width="22" height="1" fill="#3f6481"/><rect x="1.500" y="55.20" width="22" height="7.900" fill="#163f5e"/><rect x="1.500" y="55.20" width="22" height="1" fill="#3f6481"/><rect x="1.500" y="64.15" width="22" height="7.900" fill="#163f5e"/><rect x="1.500" y="64.15" width="22" height="1" fill="#3f6481"/><rect x="1.500" y="73.10" width="22" height="7.900" fill="#163f5e"/><rect x="1.500" y="73.10" width="22" height="1" fill="#3f6481"/><rect x="1.500" y="82.05" width="22" height="7.900" fill="#163f5e"/><rect x="1.500" y="82.05" width="22" height="1" fill="#3f6481"/><path d="M1.500,1.500H18L5,72H1.500z" fill="#fff" opacity=".1"/><rect x="2" y="83.00" width="21" height="7.50" fill="#2ea3f2"/></svg><svg class="abs" style="left:62px;top:12px" width="25" height="92" viewBox="0 0 25 92"><rect x="0" y="0" width="25" height="92" fill="#05121d"/><rect x="1.500" y="1.50" width="22" height="7.900" fill="#163f5e"/><rect x="1.500" y="1.50" width="22" height="1" fill="#3f6481"/><rect x="1.500" y="10.45" width="22" height="7.900" fill="#163f5e"/><rect x="1.500" y="10.45" width="22" height="1" fill="#3f6481"/><rect x="1.500" y="19.40" width="22" height="7.900" fill="#163f5e"/><rect x="1.500" y="19.40" width="22" height="1" fill="#3f6481"/><rect x="1.500" y="28.35" width="22" height="7.900" fill="#163f5e"/><rect x="1.500" y="28.35" width="22" height="1" fill="#3f6481"/><rect x="1.500" y="37.30" width="22" height="7.900" fill="#163f5e"/><rect x="1.500" y="37.30" width="22" height="1" fill="#3f6481"/><rect x="1.500" y="46.25" width="22" height="7.900" fill="#163f5e"/><rect x="1.500" y="46.25" width="22" height="1" fill="#3f6481"/><rect x="1.500" y="55.20" width="22" height="7.900" fill="#163f5e"/><rect x="1.500" y="55.20" width="22" height="1" fill="#3f6481"/><rect x="1.500" y="64.15" width="22" height="7.900" fill="#163f5e"/><rect x="1.500" y="64.15" width="22" height="1" fill="#3f6481"/><rect x="1.500" y="73.10" width="22" height="7.900" fill="#163f5e"/><rect x="1.500" y="73.10" width="22" height="1" fill="#3f6481"/><rect x="1.500" y="82.05" width="22" height="7.900" fill="#163f5e"/><rect x="1.500" y="82.05" width="22" height="1" fill="#3f6481"/><path d="M1.500,1.500H18L5,72H1.500z" fill="#fff" opacity=".1"/><rect x="2" y="86.00" width="21" height="4.50" fill="#2ea3f2"/></svg><div class="abs" style="left:100px;width:37.500px;top:10.4px;text-align:right;font-size:10.500px;line-height:12px;color:#555;letter-spacing:.3px">100</div><div class="abs" style="left:100px;width:37.500px;top:27.5px;text-align:right;font-size:10.500px;line-height:12px;color:#555;letter-spacing:.3px">80</div><div class="abs" style="left:100px;width:37.500px;top:45.2px;text-align:right;font-size:10.500px;line-height:12px;color:#555;letter-spacing:.3px">60</div><div class="abs" style="left:100px;width:37.500px;top:62.6px;text-align:right;font-size:10.500px;line-height:12px;color:#555;letter-spacing:.3px">40</div><div class="abs" style="left:100px;width:37.500px;top:80.4px;text-align:right;font-size:10.500px;line-height:12px;color:#555;letter-spacing:.3px">20</div><div class="abs" style="left:100px;width:37.500px;top:98.1px;text-align:right;font-size:10.500px;line-height:12px;color:#555;letter-spacing:.3px">0</div><svg class="abs" style="left:139px;top:14px" width="145" height="92" viewBox="0 0 145 92">
   <defs><linearGradient id="cg" x1="0" y1="0" x2="1" y2="1"><stop offset="0" stop-color="#4a6f8c"/><stop offset=".3" stop-color="#264f70"/><stop offset=".5" stop-color="#123a5b"/><stop offset="1" stop-color="#0d3150"/></linearGradient></defs>
   <rect x="0" y="0" width="145" height="92" fill="#5d6268"/>
   <rect x="2" y="2" width="141" height="88" fill="#0f3452"/>
   <path d="M2,2H143L129,4L2,61z" fill="url(#cg)"/>
   <path d="M2,88.700 Q12,88 22,88.800 T42,88.600 T62,88.900 T82,88.600 T102,88.800 T122,88.600 T143,88.700 V90H2z" fill="#2a9fe6"/>
   <path d="M24,88.900q8,-1.200 14,0M78,88.800q8,-1.200 16,0M126,88.800q8,-1 16,0" stroke="#36d08a" stroke-width="1.200" fill="none"/>
  </svg>
  <svg class="abs" style="left:291px;top:52px" width="10" height="14" viewBox="0 0 10 14"><path d="M1.800,1.500L7.600,7L1.800,12.500" fill="none" stroke="#2e2e2e" stroke-width="2.400"/></svg>
  <svg class="abs" style="left:134.500px;top:112px" width="11" height="12" viewBox="0 0 11 12"><path d="M5.500,0.600L10.400,5.600H7.800V10.800H3.200V5.600H0.600z" fill="#35a6f4" stroke="#1878c8" stroke-width=".9"/></svg>
  <svg class="abs" style="left:186.500px;top:112px" width="11" height="12" viewBox="0 0 11 12"><path d="M5.500,11L10.400,6H7.800V0.800H3.200V6H0.600z" fill="#4be04b" stroke="#22a822" stroke-width=".9"/></svg>
<div class="abs t12" style="left:21px;top:111px;line-height:14px;color:#222">CPU</div>
  <div class="abs t12" style="left:62px;top:111px;line-height:14px;color:#222">RAM</div>
  <div class="abs" style="left:147px;top:111px;line-height:14px;color:#222;white-space:nowrap;font-size:11.5px">1 KB/s</div>
  <div class="abs" style="left:199px;top:111px;line-height:14px;color:#222;white-space:nowrap;font-size:11.5px">1 KB/s</div>
 </div>
 <div class="wt" style="top:381px">Registri recenti</div>
 <div class="wp" style="top:410px">
  <svg class="abs" style="left:22px;top:33px" width="13" height="9" viewBox="0 0 13 9"><path d="M1.400,7.200L6.500,2L11.600,7.200" fill="none" stroke="#a9a9a9" stroke-width="2.300"/></svg><div class="nav" style="top:57px">1/5</div><svg class="abs" style="left:21.500px;top:82px" width="14" height="10" viewBox="0 0 14 10"><path d="M1.400,1.800L7,7.400L12.600,1.800" fill="none" stroke="#2c2c2c" stroke-width="2.700"/></svg>
  <div class="row" style="top:8px;background:rgba(255,255,255,.45)"><svg class="abs" style="left:6px;top:4px" width="15" height="15" viewBox="0 0 15 15"><circle cx="7.5" cy="7.5" r="6.4" fill="url(#gi)" stroke="#1f5599" stroke-width="1"/><rect x="6.5" y="6.3" width="2.2" height="5.2" fill="#fff"/><circle cx="7.6" cy="4.1" r="1.3" fill="#fff"/></svg><span>System successfully removed [Vol...</span></div>
  <div class="row" style="top:32px;background:rgba(226,229,239,.85)"><svg class="abs" style="left:6px;top:4px" width="15" height="15" viewBox="0 0 15 15"><circle cx="7.5" cy="7.5" r="6.4" fill="url(#gi)" stroke="#1f5599" stroke-width="1"/><rect x="6.5" y="6.3" width="2.2" height="5.2" fill="#fff"/><circle cx="7.6" cy="4.1" r="1.3" fill="#fff"/></svg><span>FTP service was started.</span></div>
  <div class="row" style="top:56px;background:rgba(255,255,255,.6)"><svg class="abs" style="left:6px;top:4px" width="15" height="15" viewBox="0 0 15 15"><circle cx="7.5" cy="7.5" r="6.4" fill="url(#gi)" stroke="#1f5599" stroke-width="1"/><rect x="6.5" y="6.3" width="2.2" height="5.2" fill="#fff"/><circle cx="7.6" cy="4.1" r="1.3" fill="#fff"/></svg><span>Windows file service was started.</span></div>
  <div class="row" style="top:80px;background:rgba(226,228,238,.9)"><svg class="abs" style="left:6px;top:4px" width="15" height="15" viewBox="0 0 15 15"><circle cx="7.5" cy="7.5" r="6.4" fill="url(#gi)" stroke="#1f5599" stroke-width="1"/><rect x="6.5" y="6.3" width="2.2" height="5.2" fill="#fff"/><circle cx="7.6" cy="4.1" r="1.3" fill="#fff"/></svg><span>Apple file service was started.</span></div>
  <div class="row" style="top:104px;background:rgba(255,255,255,.7)"><svg class="abs" style="left:6px;top:4px" width="15" height="15" viewBox="0 0 15 15"><circle cx="7.5" cy="7.5" r="6.4" fill="url(#gi)" stroke="#1f5599" stroke-width="1"/><rect x="6.5" y="6.3" width="2.2" height="5.2" fill="#fff"/><circle cx="7.6" cy="4.1" r="1.3" fill="#fff"/></svg><span>System successfully stopped Web...</span></div>
 </div>
 <div class="wt" style="top:561px">Connessioni correnti</div>
 <div class="wp" style="top:590px">
  <svg class="abs" style="left:22px;top:33px" width="13" height="9" viewBox="0 0 13 9"><path d="M1.400,7.200L6.500,2L11.600,7.200" fill="none" stroke="#a9a9a9" stroke-width="2.300"/></svg><div class="nav" style="top:57px">1/1</div><svg class="abs" style="left:22px;top:83px" width="13" height="9" viewBox="0 0 13 9"><path d="M1.400,1.800L6.500,7L11.600,1.800" fill="none" stroke="#a9a9a9" stroke-width="2.300"/></svg>
  <div class="abs" style="left:54px;top:8px;width:253px;height:24px;background:rgba(255,255,255,.5)"></div>
  <div class="abs" style="left:54px;top:32px;width:253px;height:97px;background:#fff"></div>
  <svg class="abs" style="left:62px;top:12.500px" width="13" height="14" viewBox="0 0 13 14"><path d="M6.500,0.400C8.400,0.400 9.500,1.800 9.500,3.800C9.500,5.300 8.900,6.600 8.100,7.400C8.200,8.600 9,9 10.500,9.500C12.300,10.100 12.600,11.200 12.600,13.400H0.400C0.400,11.200 0.700,10.100 2.500,9.500C4,9 4.800,8.600 4.900,7.400C4.100,6.600 3.500,5.300 3.500,3.800C3.500,1.800 4.600,0.400 6.500,0.400Z" fill="#4b4b4b"/></svg>
  <svg class="abs" style="left:281px;top:13px" width="18" height="12" viewBox="0 0 18 12">
   <path d="M5.200,1.600L7.600,0.400M7.800,4L10,2.800" stroke="#777" stroke-width="1.100" stroke-linecap="round"/>
   <path d="M3.800,1.600L9.400,6.400L8.200,8.200L5.200,9L3.400,10.800L1,10.600L2.400,8.400L1.600,5.400Z" fill="#2b2b2b"/>
   <circle cx="14" cy="8" r="2.600" fill="#f7c9cf" stroke="#b9434f" stroke-width="1.100"/><path d="M12.300,6.300L15.700,9.700" stroke="#b9434f" stroke-width="1"/>
  </svg>
  <div class="abs" style="left:78.500px;top:12px;line-height:14px;white-space:nowrap">admin</div>
  <div class="abs" style="left:126px;top:12px;line-height:14px;white-space:nowrap">HTTP</div>
  <div class="abs" style="left:180px;top:12px;line-height:14px;white-space:nowrap">00:39:36</div>
 </div>
 <svg class="abs" style="left:262px;top:728px" width="78" height="28" viewBox="0 0 78 28">
  <path d="M9,28L30.500,8.500H78V28z" fill="#f3f5f8"/><path d="M9,28L30.500,8.500H78" fill="none" stroke="#c9cdd5" stroke-width="1"/>
  <path d="M44.800,15.800L51,21.400L57.200,15.800" fill="none" stroke="#222" stroke-width="2.900"/>
 </svg>
</div>
<!--WMARK-->
<svg class="abs" style="left:1626px;top:884px;z-index:50" width="290" height="75" viewBox="1626 884 290 75">
 <defs><linearGradient id="wg" x1="0" y1="0" x2=".35" y2="1"><stop offset="0" stop-color="#f1f4fd"/><stop offset=".4" stop-color="#c3cef3"/><stop offset="1" stop-color="#8b9fe3"/></linearGradient></defs>
 <path d="M1659.400,897.500L1696.800,906.600L1685,948.800L1639,936z" fill="url(#wg)" stroke="url(#wg)" stroke-width="5" stroke-linejoin="round" opacity=".88"/>
 <path d="M1659.400,897.500L1696.800,906.600L1685,948.800L1639,936z" fill="none" stroke="#fff" stroke-opacity=".35" stroke-width="1" stroke-linejoin="round" transform="translate(0,0)"/>
 <path d="M1659.500,911.500L1675.200,931.500M1681.500,916.200L1654.200,925.500" stroke="#fff" stroke-opacity=".85" stroke-width="4.200" stroke-linecap="round"/>
 <text x="1704" y="933.600" font-family="'Liberation Sans',sans-serif" font-size="24" fill="#7f90c8" fill-opacity=".72" textLength="178" lengthAdjust="spacingAndGlyphs" letter-spacing="0">xtremehardware.com</text>
</svg>


<div class="abs" id="logo" style="left:874px;top:905px;height:32px;white-space:nowrap;letter-spacing:0;color:#fff">
 <span style="font-family:'Liberation Sans',sans-serif;font-weight:bold;font-size:21.500px;letter-spacing:-1.100px;position:absolute;left:0;top:5px;line-height:24px;text-shadow:0 0 1px rgba(255,255,255,.5)">Syno</span><span style="font-family:'Liberation Serif',serif;font-size:24px;letter-spacing:-.7px;position:absolute;left:47.500px;top:3.500px;line-height:26px">logy</span><span style="font-family:'Liberation Sans',sans-serif;font-size:19px;position:absolute;left:95px;top:9px;line-height:22px;color:#c2d2e4;letter-spacing:-.2px;text-shadow:1px 1px 0 rgba(70,90,120,.8),0 0 1px rgba(60,80,110,.6)">DSM 4.1</span>
</div>
</body>
</html>
